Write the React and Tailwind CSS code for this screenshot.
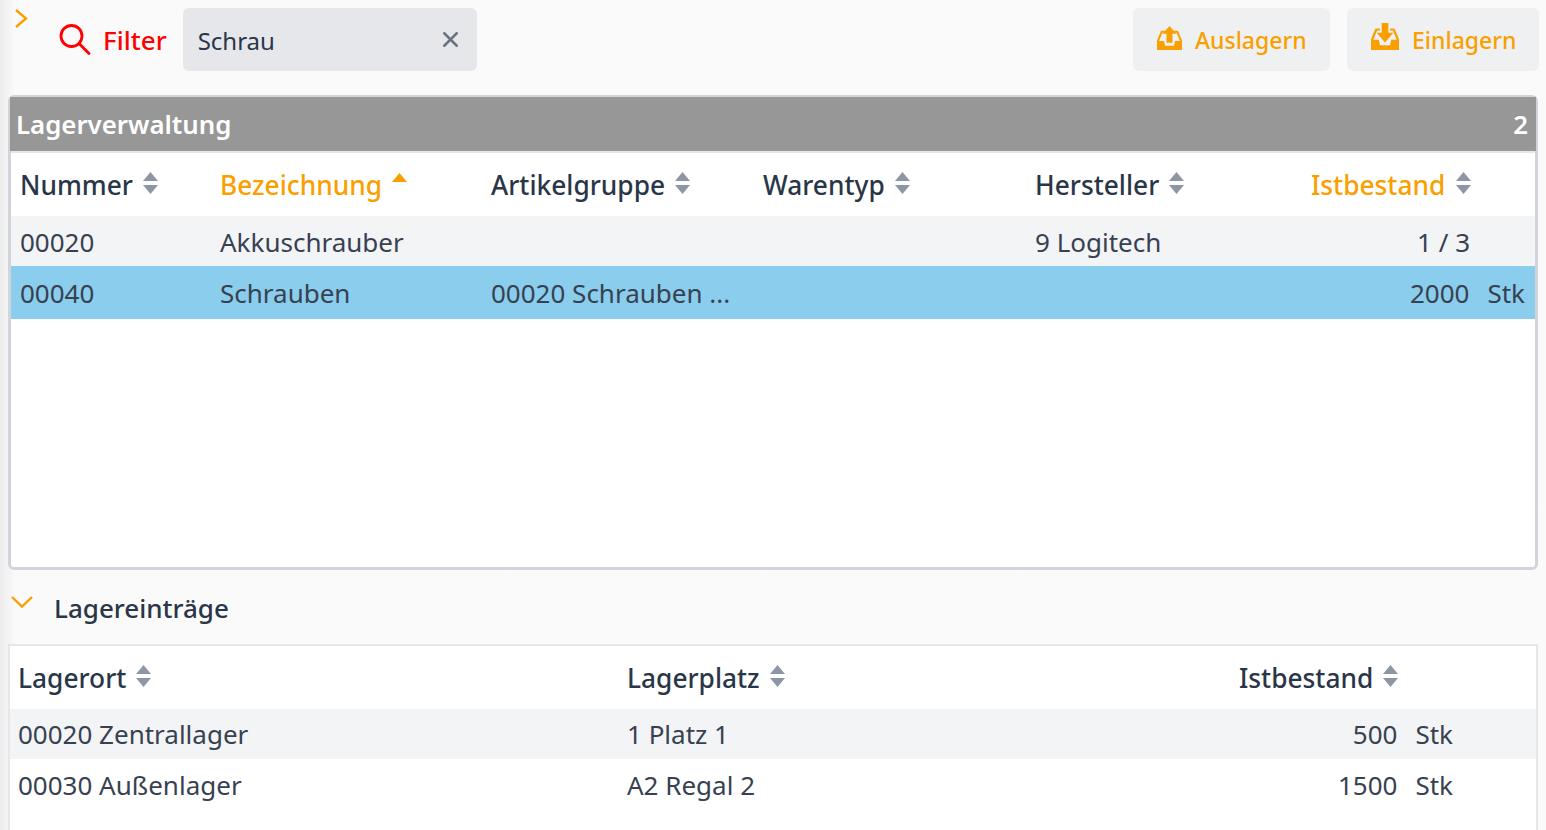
import { X } from "lucide-react";

const font = { fontFamily: '"Noto Sans", sans-serif' };

const SortIcon = ({ active }) => (
  <svg width="15" height="22" viewBox="0 0 15 22" className="ml-[10px] shrink-0">
    <path d="M7.5 0 L15 9 H0 Z" fill={active ? "#f9a000" : "#8d96a5"} />
    {!active && <path d="M0 13 H15 L7.5 22 Z" fill="#8d96a5" />}
  </svg>
);

const tray =
  "M0 25 V15 L4 5 H8 V7 H5.5 L2 15.5 H7 L8 20.5 H17 L18 15.5 H23 L19.5 7 H17 V5 H21 L25 15 V25 Z";

const TrayIcon = ({ down, width, height }) => (
  <svg width={width} height={height} viewBox="0 0 25 25" preserveAspectRatio="none" className="shrink-0">
    <path d={tray} fill="#f9a000" />
    {down ? (
      <path d="M9.5 0 H15.5 V9 H20 L12.5 18 L5 9 H9.5 Z" fill="#f9a000" />
    ) : (
      <path d="M12.5 0 L19.5 8 H15.5 V17.5 H9.5 V8 H5.5 Z" fill="#f9a000" />
    )}
  </svg>
);

const HeadCell = ({ label, active }) => (
  <div className={`flex items-center pl-[9px] text-[26.3px] font-medium ${active ? "text-[#f9a000]" : "text-[#2a3648]"}`}>
    <span className="pt-0.5">{label}</span>
    <span className={active ? "-mt-[2px]" : "-mt-1"}>
      <SortIcon active={active} />
    </span>
  </div>
);

const SubHead = ({ label }) => (
  <div className="flex items-center pl-2 text-[26.3px] font-medium text-[#2a3648]">
    <span className="pt-0.5">{label}</span>
    <span className="-mt-1">
      <SortIcon />
    </span>
  </div>
);

const mainCols = "grid grid-cols-[200px_271px_272px_272px_270px_1fr]";
const subCols = "grid grid-cols-[609px_612px_1fr]";

export default function App() {
  return (
    <div
      style={font}
      className="h-[830px] w-[1546px] overflow-hidden bg-[#fafafa] bg-gradient-to-r from-[#ececec] from-0% to-[#fafafa] to-[1%] pl-2 pr-2 text-[#374151]"
    >
      {/* toolbar */}
      <div className="-mr-px flex h-[95px] pt-2">
        <svg width="14" height="20" viewBox="0 0 14 20" className="ml-[6px] shrink-0" fill="none" stroke="#f9a000" strokeWidth="2.4">
          <path d="M2 2 L12 10.5 L2 19" />
        </svg>
        <svg width="32" height="32" viewBox="0 0 32 32" className="ml-[31px] mt-[16px] shrink-0" fill="none" stroke="#ff0000" strokeWidth="2.8">
          <circle cx="12.5" cy="12" r="10.5" />
          <path d="M20 19.5 L30 29.5" strokeLinecap="round" />
        </svg>
        <span className="ml-[12px] mt-[14px] text-[26px] font-medium leading-[36px] text-[#ff0000]">Filter</span>
        <div className="ml-[16px] flex h-[63px] w-[294px] items-center justify-between rounded-md bg-[#e5e7eb] pl-[15px] pr-[14px] text-[24px] text-[#2a3648]">
          <span className="pt-0.5">Schrau</span>
          <X size={25} color="#6b7280" strokeWidth={2.4} />
        </div>
        <div className="ml-auto flex gap-[17px]">
          <div className="flex h-[63px] w-[197px] items-center rounded-md bg-[#eff0f2] pl-[24px] text-[23px] font-medium text-[#f9a000]">
            <span className="-mt-[3px] flex">
              <TrayIcon width={25} height={24} />
            </span>
            <span className="ml-[13px] pt-0.5">Auslagern</span>
          </div>
          <div className="flex h-[63px] w-[192px] items-center rounded-md bg-[#eff0f2] pl-[24px] text-[23px] font-medium text-[#f9a000]">
            <span className="-mt-[7px] flex">
              <TrayIcon down width={28} height={27} />
            </span>
            <span className="ml-[13px] pt-0.5">Einlagern</span>
          </div>
        </div>
      </div>

      {/* main table */}
      <div className="h-[475px] rounded-md border-[3px] border-[#d1d5db] border-t-[2px] bg-white">
        <div className="-mx-[1px] flex h-[54px] items-center justify-between bg-[#979797] pl-[6px] pr-[8px] text-[25.8px] font-semibold text-white">
          <span>Lagerverwaltung</span>
          <span>2</span>
        </div>
        <div className="h-[2px] bg-[#e5e7eb]"></div>
        <div>
          <div className={`${mainCols} h-[63px] items-center`}>
            <HeadCell label="Nummer" />
            <HeadCell label="Bezeichnung" active />
            <HeadCell label="Artikelgruppe" />
            <HeadCell label="Warentyp" />
            <HeadCell label="Hersteller" />
            <div className="flex items-center pl-[15px] text-[26.3px] font-medium text-[#f9a000]">
              <span className="pt-0.5">Istbestand</span>
              <span className="-mt-1 ml-px">
                <SortIcon />
              </span>
            </div>
          </div>
          <div className={`${mainCols} h-[50px] items-center bg-[#f3f4f6] pt-0.5 text-[26px]`}>
            <div className="pl-[9px]">00020</div>
            <div className="pl-[9px]">Akkuschrauber</div>
            <div></div>
            <div></div>
            <div className="pl-[9px]">9 Logitech</div>
            <div className="pr-[65px] text-right">1 / 3</div>
          </div>
          <div className={`${mainCols} h-[53px] items-center bg-[#8bcdec] pt-0.5 text-[26px]`}>
            <div className="pl-[9px]">00040</div>
            <div className="pl-[9px]">Schrauben</div>
            <div className="pl-[9px]">00020 Schrauben ...</div>
            <div></div>
            <div></div>
            <div className="flex justify-end pr-[10px]">
              <span>2000</span>
              <span className="ml-[18px]">Stk</span>
            </div>
          </div>
        </div>
      </div>

      {/* Lagereinträge */}
      <div className="flex h-[74px] items-start pt-[20px]">
        <svg width="24" height="16" viewBox="0 0 24 16" className="ml-[2px] mt-[4px] shrink-0" fill="none" stroke="#f9a000" strokeWidth="2.4">
          <path d="M2 3 L12 12.5 L22 3" />
        </svg>
        <span className="ml-[20px] text-[26px] font-medium leading-[36px] text-[#2a3648]">Lagereinträge</span>
      </div>
      <div className="h-[200px] border-2 border-[#e5e7eb] bg-white">
        <div className={`${subCols} h-[63px] items-center`}>
          <SubHead label="Lagerort" />
          <SubHead label="Lagerplatz" />
          <SubHead label="Istbestand" />
        </div>
        <div className={`${subCols} h-[50px] items-center bg-[#f3f4f6] text-[26px]`}>
          <div className="pl-2">00020 Zentrallager</div>
          <div className="pl-2">1 Platz 1</div>
          <div className="flex justify-end pr-[83px]">
            <span>500</span>
            <span className="ml-[18px]">Stk</span>
          </div>
        </div>
        <div className={`${subCols} h-[52px] items-center text-[26px]`}>
          <div className="pl-2">00030 Außenlager</div>
          <div className="pl-2">A2 Regal 2</div>
          <div className="flex justify-end pr-[83px]">
            <span>1500</span>
            <span className="ml-[18px]">Stk</span>
          </div>
        </div>
      </div>
    </div>
  );
}
